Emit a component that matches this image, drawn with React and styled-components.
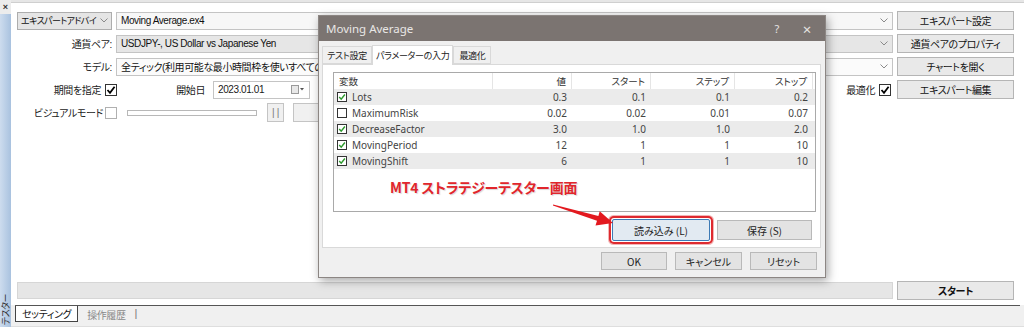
import React from 'react';
import styled, { createGlobalStyle } from 'styled-components';

const GlobalStyle = createGlobalStyle`
  html, body { margin: 0; padding: 0; background: #f0f0f0; }
  body {
    font-family: "Liberation Sans", "Noto Sans CJK JP", sans-serif;
    font-size: 10px;
    color: #1a1a1a;
    font-feature-settings: "palt";
  }
  * { box-sizing: border-box; }
`;

const Page = styled.div`
  position: relative;
  width: 1024px;
  height: 327px;
  display: flex;
  overflow: hidden;
  background: #f0f0f0;
`;

const SideStrip = styled.div`
  width: 11px;
  display: flex;
  flex-direction: column;
`;
const CloseBox = styled.div`
  height: 14px;
  display: flex;
  align-items: center;
  justify-content: center;
  font-size: 9px;
  font-weight: bold;
  color: #333;
  background: #ececec;
`;
const SideBar = styled.div`
  flex: 1;
  background: linear-gradient(to right, #cddcee, #a9c2df);
  display: flex;
  align-items: flex-end;
  justify-content: center;
  padding-bottom: 2px;
  overflow: hidden;
`;
const SideLabel = styled.span`
  writing-mode: vertical-rl;
  text-orientation: sideways;
  transform: rotate(180deg);
  font-family: "Noto Sans CJK JP", sans-serif;
  font-size: 9px;
  line-height: 10px;
  letter-spacing: -0.5px;
  color: #333;
  white-space: nowrap;
`;

const Main = styled.div`
  flex: 1;
  display: flex;
  flex-direction: column;
  letter-spacing: -0.4px;
`;
const TopRule = styled.div`
  height: 3px;
  background: #e6e6e6;
  border-bottom: 1px solid #cfcfcf;
`;
const Panel = styled.div`
  flex: 1;
  background: #fff;
  padding: 8px 10px 5px 6px;
  display: flex;
  flex-direction: column;
  gap: 4px;
`;
const Row = styled.div`
  display: flex;
  align-items: center;
  gap: 4px;
  height: 19px;
`;
const LabelCell = styled.div`
  width: ${p => p.$w || 95}px;
  flex: none;
  display: flex;
  justify-content: flex-end;
  align-items: center;
  gap: ${p => p.$gap || 4}px;
  white-space: nowrap;
`;
const Label = styled.span`
  font-size: 10px;
  color: #222;
  white-space: nowrap;
`;
const Combo = styled.div`
  flex: 1;
  height: 18px;
  border: 1px solid #c4c4c4;
  background: ${p => p.$bg || '#fff'};
  display: flex;
  align-items: center;
  justify-content: space-between;
  padding: 0 4px;
  font-size: 10px;
  color: #111;
  white-space: nowrap;
  overflow: hidden;
`;
const Select = styled(Combo)`
  flex: none;
  width: 95px;
  background: #e5e5e5;
  border-color: #adadad;
  padding: 0 3px;
  gap: 2px;
`;
const SelectText = styled.span`
  flex: 1;
  min-width: 0;
  white-space: nowrap;
  font-size: 9px;
  letter-spacing: -0.6px;
`;
const SideButton = styled.div`
  width: 117px;
  flex: none;
  height: 19px;
  border: 1px solid #b5b5b5;
  background: #e9e9e9;
  display: flex;
  align-items: center;
  justify-content: center;
  font-size: 10px;
  font-weight: ${p => (p.$bold ? 700 : 400)};
  color: #111;
`;
const Box = styled.span`
  width: 12px;
  height: 12px;
  flex: none;
  border: 1px solid ${p => (p.$off ? '#b0b0b0' : '#333')};
  background: #fff;
  display: inline-flex;
  align-items: center;
  justify-content: center;
`;
const Middle = styled.div`
  flex: 1;
  display: flex;
  align-items: center;
  height: 19px;
`;
const DateLabel = styled.span`
  width: 84px;
  text-align: right;
  font-size: 10px;
  margin-right: 8px;
`;
const DateBox = styled.div`
  width: 97px;
  height: 18px;
  border: 1px solid #c4c4c4;
  background: #fff;
  display: flex;
  align-items: center;
  justify-content: space-between;
  padding: 0 4px;
  font-size: 10px;
`;
const Fill = styled.div`
  flex: 1;
`;
const Slider = styled.div`
  width: 130px;
  height: 6px;
  margin-left: 6px;
  border: 1px solid #b8b8b8;
  background: #fff;
`;
const SmallButton = styled.div`
  width: ${p => p.$w}px;
  height: 19px;
  margin-left: ${p => p.$ml}px;
  border: 1px solid #c4c4c4;
  background: #f0f0f0;
  display: flex;
  align-items: center;
  justify-content: center;
  color: #777;
  font-size: 10px;
`;
const Progress = styled.div`
  flex: 1;
  height: 17px;
  background: #e6e6e6;
  border: 1px solid #d6d6d6;
`;

const TabBar = styled.div`
  height: 22px;
  background: #f0f0f0;
  border-bottom: 1px solid #dedede;
  padding: 0 4px;
`;
const TabLine = styled.div`
  border-top: 1px solid #555;
  display: flex;
  align-items: flex-start;
  height: 18px;
`;
const BottomTab = styled.div`
  height: 16px;
  padding: 0 ${p => (p.$active ? 6 : 9)}px;
  display: flex;
  align-items: center;
  font-size: 10px;
  white-space: nowrap;
  color: ${p => (p.$active ? '#111' : '#8a8a8a')};
  background: ${p => (p.$active ? '#fff' : 'transparent')};
  border: ${p => (p.$active ? '1px solid #444' : 'none')};
  border-top: none;
`;
const TabSep = styled.span`
  margin-top: 1px;
  color: #777;
  font-size: 11px;
`;

/* Dialog */
const Dialog = styled.div`
  position: absolute;
  left: 318px;
  top: 15px;
  width: 508px;
  background: #f0f0f0;
  border: 1px solid #8c8683;
  box-shadow: 2px 3px 9px rgba(0, 0, 0, 0.35);
  display: flex;
  flex-direction: column;
  font-family: "Noto Sans", "Noto Sans CJK JP", sans-serif;
`;
const TitleBar = styled.div`
  height: 25px;
  background: #7b7471;
  color: #e9e7e6;
  display: flex;
  align-items: center;
  padding-left: 7px;
  font-size: 11.5px;
`;
const TitleText = styled.span`
  flex: 1;
`;
const TitleIcon = styled.span`
  width: 30px;
  text-align: center;
  color: #e6e3e2;
  font-size: ${p => p.$size || 12}px;
  &:last-child { margin-right: 3px; }
`;
const DialogBody = styled.div`
  padding: 4px 4px 7px 3px;
  display: flex;
  flex-direction: column;
`;
const DlgTabs = styled.div`
  display: flex;
  height: 19px;
  align-items: flex-end;
  position: relative;
  z-index: 1;
`;
const DlgTab = styled.div`
  min-width: ${p => p.$w}px;
  padding: 0 3px;
  height: ${p => (p.$active ? 20 : 18)}px;
  margin-bottom: ${p => (p.$active ? -1 : 0)}px;
  background: ${p => (p.$active ? '#fff' : '#f0f0f0')};
  border: 1px solid #d9d9d9;
  border-bottom: ${p => (p.$active ? 'none' : '1px solid #d9d9d9')};
  display: flex;
  align-items: center;
  justify-content: center;
  font-family: "Noto Sans CJK JP", sans-serif;
  font-size: 9px;
  letter-spacing: -0.3px;
  color: #222;
  white-space: nowrap;
`;
const TabPanel = styled.div`
  height: 184px;
  background: #fff;
  border: 1px solid #d9d9d9;
  padding: 7px 4px 6px 10px;
  display: flex;
  flex-direction: column;
  gap: 7px;
`;
const ListView = styled.div`
  height: 141px;
  border: 1px solid #a9a9a9;
  background: #fff;
  font-size: 10px;
  color: #333;
`;
const GridRow = styled.div`
  display: grid;
  grid-template-columns: 159px 79px 79px 84px 78px 1fr;
  height: 16px;
  background: ${p => p.$bg || '#fff'};
`;
const HeadCell = styled.div`
  display: flex;
  align-items: center;
  justify-content: ${p => (p.$left ? 'flex-start' : 'flex-end')};
  padding: 0 5px;
  border-right: 1px solid #e5e5e5;
  font-family: "Noto Sans CJK JP", sans-serif;
  font-size: 9.5px;
  color: #333;
`;
const Cell = styled.div`
  display: flex;
  align-items: center;
  justify-content: ${p => (p.$left ? 'flex-start' : 'flex-end')};
  padding: 0 5px 0 ${p => (p.$left ? 3 : 5)}px;
  gap: 5px;
  color: #444;
  white-space: nowrap;
`;
const MiniBox = styled.span`
  width: 10px;
  height: 10px;
  border: 1px solid #333;
  background: #fff;
  display: inline-flex;
  align-items: center;
  justify-content: center;
`;
const ListButtons = styled.div`
  display: flex;
  justify-content: flex-end;
  align-items: center;
  gap: 7px;
  padding-right: 4px;
`;
const DlgButton = styled.div`
  width: ${p => p.$w}px;
  height: ${p => p.$h || 20}px;
  border: 1px solid ${p => (p.$focus ? '#3d7ab5' : '#b9b9b9')};
  background: ${p => (p.$focus ? '#e2eaf2' : '#e3e3e3')};
  display: flex;
  align-items: center;
  justify-content: center;
  font-size: 10px;
  color: #222;
  font-family: "Noto Sans CJK JP", sans-serif;
  ${p =>
    p.$highlight &&
    `border-radius: 2px;
     box-shadow: 0 0 0 1px #fff, 0 0 0 3px #de2a2f, 0 0 0 4px rgba(222,42,47,0.35);`}
`;
const Footer = styled.div`
  margin-top: 4px;
  display: flex;
  justify-content: flex-end;
  gap: 8px;
  padding-right: 4px;
`;

const Annotation = styled.div`
  position: absolute;
  left: 390px;
  top: 177px;
  font-family: "Noto Sans CJK JP", sans-serif;
  font-weight: 700;
  font-size: 14px;
  color: #e1262c;
  letter-spacing: -0.2px;
  text-shadow: 1px 1px 1px rgba(0,0,0,0.15);
  white-space: nowrap;
`;
const ArrowSvg = styled.svg`
  position: absolute;
  left: 548px;
  top: 198px;
  overflow: visible;
`;

const Chevron = ({ color = '#8a8a8a' }) => (
  <svg width="8" height="5" viewBox="0 0 8 5" style={{ flex: 'none' }}>
    <polyline points="0.5,0.5 4,4 7.5,0.5" fill="none" stroke={color} strokeWidth="1" />
  </svg>
);

const Check = ({ color = '#000', size = 10 }) => (
  <svg width={size} height={size} viewBox="0 0 10 10">
    <polyline points="1.5,5 4,7.8 8.6,1.8" fill="none" stroke={color} strokeWidth="1.8" />
  </svg>
);

const params = [
  { name: 'Lots', on: true, v: ['0.3', '0.1', '0.1', '0.2'] },
  { name: 'MaximumRisk', on: false, v: ['0.02', '0.02', '0.01', '0.07'] },
  { name: 'DecreaseFactor', on: true, v: ['3.0', '1.0', '1.0', '2.0'] },
  { name: 'MovingPeriod', on: true, v: ['12', '1', '1', '10'] },
  { name: 'MovingShift', on: true, v: ['6', '1', '1', '10'] },
];

export default function App() {
  return (
    <Page>
      <GlobalStyle />
      <SideStrip>
        <CloseBox>×</CloseBox>
        <SideBar>
          <SideLabel>テスター</SideLabel>
        </SideBar>
      </SideStrip>
      <Main>
        <TopRule />
        <Panel>
          <Row>
            <Select>
              <SelectText>エキスパートアドバイ</SelectText>
              <Chevron />
            </Select>
            <Combo $bg="#f7f7f7">
              <span>Moving Average.ex4</span>
              <Chevron />
            </Combo>
            <SideButton>エキスパート設定</SideButton>
          </Row>
          <Row>
            <LabelCell>
              <Label>通貨ペア:</Label>
            </LabelCell>
            <Combo $bg="#e6e6e6">
              <span>USDJPY-, US Dollar vs Japanese Yen</span>
              <Chevron />
            </Combo>
            <SideButton>通貨ペアのプロパティ</SideButton>
          </Row>
          <Row>
            <LabelCell>
              <Label>モデル:</Label>
            </LabelCell>
            <Combo $bg="#fbfbfb">
              <span>全ティック(利用可能な最小時間枠を使いすべてのティックを生成する最も正確な方法)</span>
              <Chevron />
            </Combo>
            <SideButton>チャートを開く</SideButton>
          </Row>
          <Row>
            <LabelCell $w={100}>
              <Label>期間を指定</Label>
              <Box>
                <Check />
              </Box>
            </LabelCell>
            <Middle>
              <DateLabel>開始日</DateLabel>
              <DateBox>
                <span>2023.01.01</span>
                <svg width="14" height="9" viewBox="0 0 14 9">
                  <rect x="0.5" y="0.5" width="7" height="8" fill="#e8e8e8" stroke="#9a9a9a" />
                  <polygon points="9,3 13,3 11,5.5" fill="#555" />
                </svg>
              </DateBox>
              <Fill />
              <Label>最適化</Label>
              <Box style={{ marginLeft: 4, marginRight: 2 }}>
                <Check />
              </Box>
            </Middle>
            <SideButton>エキスパート編集</SideButton>
          </Row>
          <Row>
            <LabelCell $w={100} $gap={2}>
              <Label>ビジュアルモード</Label>
              <Box $off />
            </LabelCell>
            <Middle>
              <Slider />
              <SmallButton $w={17} $ml={10}>| |</SmallButton>
              <SmallButton $w={120} $ml={9} />
            </Middle>
          </Row>
          <Fill />
          <Row>
            <Progress />
            <SideButton $bold>スタート</SideButton>
          </Row>
        </Panel>
        <TabBar>
          <TabLine>
            <BottomTab $active>セッティング</BottomTab>
            <BottomTab>操作履歴</BottomTab>
            <TabSep>|</TabSep>
          </TabLine>
        </TabBar>
      </Main>

      <Dialog>
        <TitleBar>
          <TitleText>Moving Average</TitleText>
          <TitleIcon $size={11}>?</TitleIcon>
          <TitleIcon $size={15}>×</TitleIcon>
        </TitleBar>
        <DialogBody>
          <DlgTabs>
            <DlgTab $w={50}>テスト設定</DlgTab>
            <DlgTab $w={74} $active>パラメーターの入力</DlgTab>
            <DlgTab $w={38}>最適化</DlgTab>
          </DlgTabs>
          <TabPanel>
            <ListView>
              <GridRow>
                <HeadCell $left>変数</HeadCell>
                <HeadCell>値</HeadCell>
                <HeadCell>スタート</HeadCell>
                <HeadCell>ステップ</HeadCell>
                <HeadCell>ストップ</HeadCell>
                <div />
              </GridRow>
              {params.map((p, i) => (
                <GridRow key={p.name} $bg={i % 2 === 0 ? '#ebebeb' : '#fff'}>
                  <Cell $left>
                    <MiniBox>{p.on && <Check color="#2e9a2e" size={8} />}</MiniBox>
                    {p.name}
                  </Cell>
                  {p.v.map((v, j) => (
                    <Cell key={j}>{v}</Cell>
                  ))}
                  <div />
                </GridRow>
              ))}
            </ListView>
            <ListButtons>
              <DlgButton $w={98} $h={22} $focus $highlight>読み込み (L)</DlgButton>
              <DlgButton $w={95}>保存 (S)</DlgButton>
            </ListButtons>
          </TabPanel>
          <Footer>
            <DlgButton $w={66} $h={18}>OK</DlgButton>
            <DlgButton $w={67} $h={18}>キャンセル</DlgButton>
            <DlgButton $w={67} $h={18}>リセット</DlgButton>
          </Footer>
        </DialogBody>
      </Dialog>

      <Annotation>MT4 ストラテジーテスター画面</Annotation>
      <ArrowSvg width="70" height="32" viewBox="0 0 70 32">
        <polygon
          points="5.1,6.5 50.4,18 51.7,13.2 65,25 47.5,27.6 49,22.8 4.9,7.5"
          fill="#e3191f"
        />
      </ArrowSvg>
    </Page>
  );
}
